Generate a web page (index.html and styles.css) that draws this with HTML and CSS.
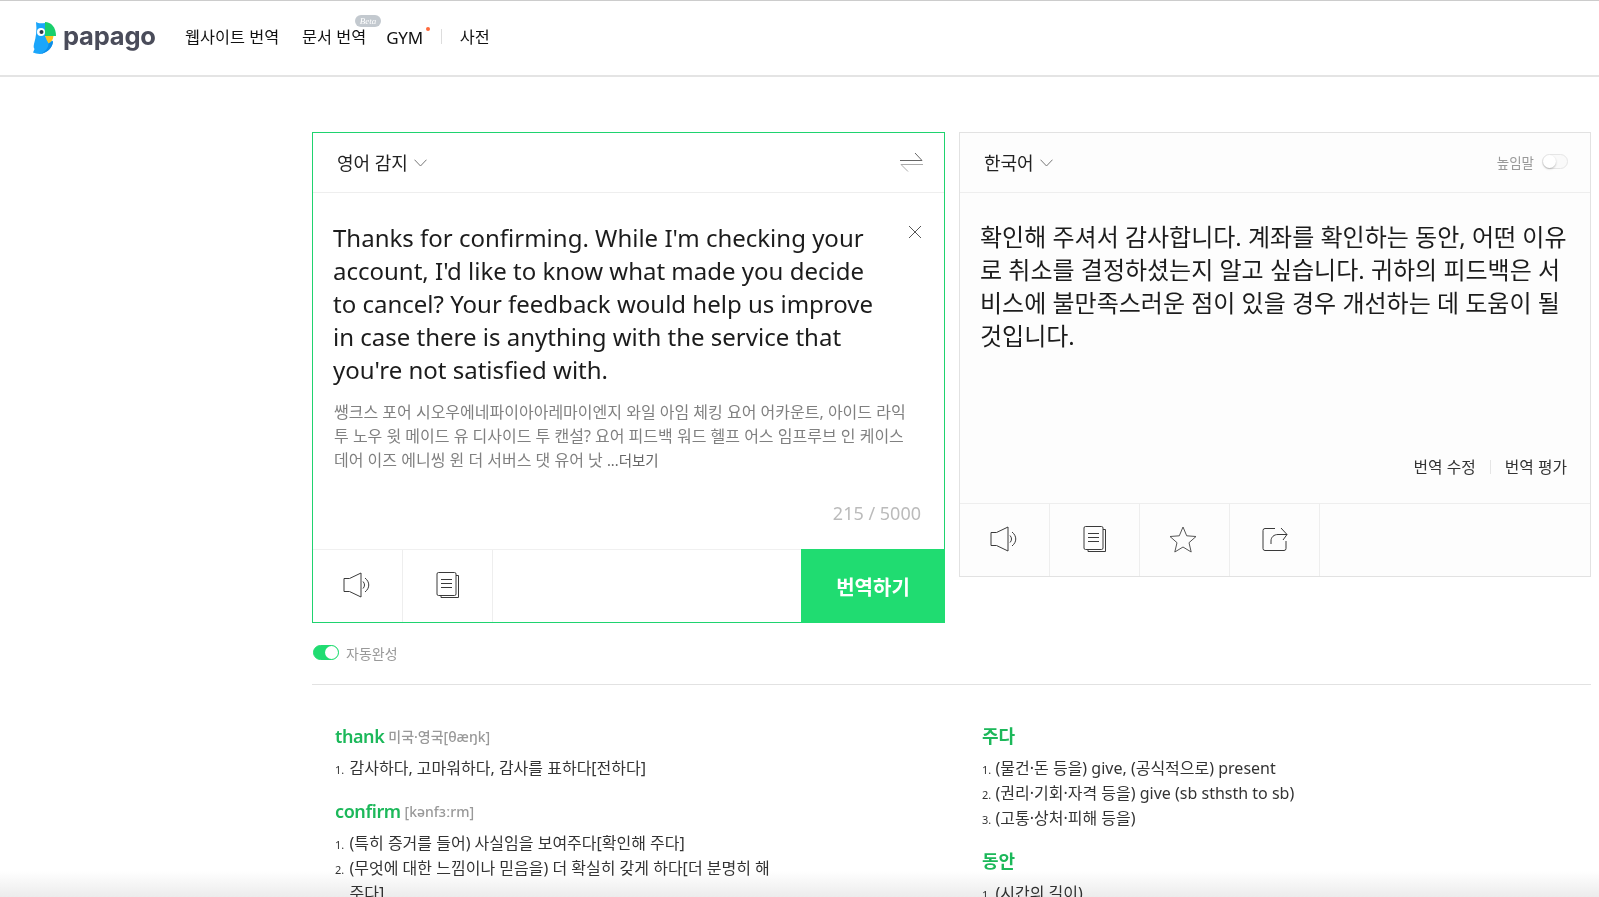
FILE: index.html
```html
<!DOCTYPE html>
<html lang="ko">
<head>
<meta charset="utf-8">
<title>Papago</title>
<link rel="stylesheet" href="styles.css">
</head>
<body>
<header class="top">
  <a class="logo">
    <svg class="bird" width="23" height="32" viewBox="0 0 23 32">
      <path d="M3 0 C5 1.500 8 1.500 12 1 V14 L20 20 C19 26 14 31 7 32 C4 32 2 31 0 30.500 L1.500 27 C.5 26 .5 24 1 22 C3 15 4 8 3 0Z" fill="#1ba6fb"/>
      <path d="M12 0 C18 0 23 5 23 14 H12Z" fill="#19cf6c"/>
      <path d="M12 14 H20.500 C20 18 18 20 15.500 21.500 C14 19 13 16.500 12 14Z" fill="#ffc41e"/>
      <path d="M15.500 21.500 C17 21 18.500 20 20 18.500 C20 26 14 31 7 32 C12 30 15.500 26 15.500 21.500Z" fill="#0d8de8"/>
      <circle cx="8" cy="10" r="4" fill="#fff"/>
      <circle cx="8.500" cy="10" r="2" fill="#2b3a4a"/>
    </svg>
    <span class="word">papago</span>
  </a>
  <nav class="nav">
    <a class="nav-item">웹사이트 번역</a>
    <a class="nav-item has-badge">문서 번역<span class="beta">Beta</span></a>
    <a class="nav-item has-dot">GYM<span class="dot"></span></a>
    <span class="sep"></span>
    <a class="nav-item">사전</a>
  </nav>
</header>

<main class="main">
  <div class="panels">
    <section class="panel source">
      <div class="panel-head">
        <span class="lang">영어 감지
          <svg class="chev" width="13" height="8" viewBox="0 0 13 8"><path d="M.5.700 6.500 7 12.500.700" fill="none" stroke="#777"/></svg>
        </span>
        <svg class="swap" width="23" height="20" viewBox="0 0 23 20"><path d="M0 8.500H22L15 1" fill="none" stroke="#666"/><path d="M23 12.500H1L8 19.500" fill="none" stroke="#aaa"/></svg>
      </div>
      <div class="source-body">
        <svg class="clear" width="14" height="14" viewBox="0 0 14 14"><path d="M1 1 13 13M13 1 1 13" fill="none" stroke="#555"/></svg>
        <p class="big">Thanks for confirming. While I'm checking your<br>account, I'd like to know what made you decide<br>to cancel? Your feedback would help us improve<br>in case there is anything with the service that<br>you're not satisfied with.</p>
        <p class="phon">쌩크스 포어 시오우에네파이아아레마이엔지 와일 아임 체킹 요어 어카운트, 아이드 라익<br>투 노우 윗 메이드 유 디사이드 투 캔설? 요어 피드백 워드 헬프 어스 임프루브 인 케이스<br>데어 이즈 에니씽 윈 더 서버스 댓 유어 낫 <span class="more">...더보기</span></p>
        <div class="count">215 / 5000</div>
      </div>
      <div class="panel-foot">
        <div class="tool">
          <svg width="29" height="26" viewBox="0 0 29 26"><path d="M1 6.500H6.500L18 1V25L6.500 19.500H1Z" fill="none" stroke="#3a3a3a" stroke-linejoin="round"/><path d="M20 9.500C22 11.500 22 14.500 20 16.500M22 6C27 10 27 16 22 20" fill="none" stroke="#3a3a3a"/></svg>
        </div>
        <div class="tool">
          <svg width="24" height="26" viewBox="0 0 24 26"><rect x="1" y=".500" width="19" height="23" rx="1.500" fill="#fff" stroke="#3a3a3a"/><path d="M20 3.500H22.500V25.500H5V24" fill="none" stroke="#3a3a3a"/><path d="M5 7.500H16M5 11.500H16M5 15.500H16" stroke="#3a3a3a"/></svg>
        </div>
        <div class="spacer"></div>
        <button class="go">번역하기</button>
      </div>
    </section>

    <section class="panel target">
      <div class="panel-head">
        <span class="lang">한국어
          <svg class="chev" width="13" height="8" viewBox="0 0 13 8"><path d="M.5.700 6.500 7 12.500.700" fill="none" stroke="#777"/></svg>
        </span>
        <span class="honor">높임말<span class="switch off"></span></span>
      </div>
      <div class="target-body">
        <p class="big ko">확인해 주셔서 감사합니다. 계좌를 확인하는 동안, 어떤 이유<br>로 취소를 결정하셨는지 알고 싶습니다. 귀하의 피드백은 서<br>비스에 불만족스러운 점이 있을 경우 개선하는 데 도움이 될<br>것입니다.</p>
        <div class="actions"><a>번역 수정</a><span class="sep small"></span><a>번역 평가</a></div>
      </div>
      <div class="panel-foot">
        <div class="tool">
          <svg width="29" height="26" viewBox="0 0 29 26"><path d="M1 6.500H6.500L18 1V25L6.500 19.500H1Z" fill="none" stroke="#3a3a3a" stroke-linejoin="round"/><path d="M20 9.500C22 11.500 22 14.500 20 16.500M22 6C27 10 27 16 22 20" fill="none" stroke="#3a3a3a"/></svg>
        </div>
        <div class="tool">
          <svg width="24" height="26" viewBox="0 0 24 26"><rect x="1" y=".500" width="19" height="23" rx="1.500" fill="#fdfdfd" stroke="#3a3a3a"/><path d="M20 3.500H22.500V25.500H5V24" fill="none" stroke="#3a3a3a"/><path d="M5 7.500H16M5 11.500H16M5 15.500H16" stroke="#3a3a3a"/></svg>
        </div>
        <div class="tool">
          <svg class="star" width="28" height="27" viewBox="0 0 28 27"><path d="M14 1 17.700 9.800 27 10.500 20 16.700 22.200 26 14 21 5.800 26 8 16.700 1 10.500 10.300 9.800Z" fill="none" stroke="#555" stroke-linejoin="round"/></svg>
        </div>
        <div class="tool">
          <svg width="26" height="26" viewBox="0 0 26 26"><path d="M13 2.500H3A2 2 0 0 0 1 4.500V22.500A2 2 0 0 0 3 24.500H22A2 2 0 0 0 24 22.500V15" fill="none" stroke="#3a3a3a"/><path d="M9 18V15C9 11 12 8.500 16 8.500H25M19 2 25 8.500 21 14" fill="none" stroke="#3a3a3a"/></svg>
        </div>
        <div class="spacer"></div>
      </div>
    </section>
  </div>

  <div class="auto"><span class="switch on"></span><span>자동완성</span></div>

  <div class="dict">
    <div class="dict-col en">
      <h3><b>thank</b> <small>미국·영국[θæŋk]</small></h3>
      <ol>
        <li>감사하다, 고마워하다, 감사를 표하다[전하다]</li>
      </ol>
      <h3><b>confirm</b> <small>[kənfɜːrm]</small></h3>
      <ol>
        <li>(특히 증거를 들어) 사실임을 보여주다[확인해 주다]</li>
        <li>(무엇에 대한 느낌이나 믿음을) 더 확실히 갖게 하다[더 분명히 해 주다]</li>
      </ol>
    </div>
    <div class="dict-col ko-col">
      <h3><b>주다</b></h3>
      <ol>
        <li>(물건·돈 등을) give, (공식적으로) present</li>
        <li>(권리·기회·자격 등을) give (sb sthsth to sb)</li>
        <li>(고통·상처·피해 등을)</li>
      </ol>
      <h3><b>동안</b></h3>
      <ol>
        <li>(시간의 길이)</li>
      </ol>
    </div>
  </div>
</main>
<div class="fade"></div>
</body>
</html>
```
FILE: styles.css
```css
* { box-sizing: border-box; }
html, body { margin: 0; height: 100%; }
body {
  height: 897px;
  overflow: hidden;
  position: relative;
  background: #fff;
  color: #222;
  font-family: "Noto Sans", "Noto Sans CJK KR", sans-serif;
}
p, h3, ol { margin: 0; padding: 0; }

.top {
  height: 77px;
  border-top: 1px solid #ccc;
  border-bottom: 2px solid #e4e4e4;
  display: flex;
  align-items: center;
  padding-left: 33px;
}
.logo { display: flex; align-items: center; width: 152px; margin-bottom: 1px; }
.word {
  font-family: Inter, "Noto Sans", sans-serif;
  font-weight: 700;
  font-size: 25.500px;
  line-height: 1;
  color: #4a4c5a;
  margin-left: 7px;
  margin-top: -3px;
  letter-spacing: -.2px;
}
.nav { display: flex; align-items: center; font-size: 16.300px; color: #111; margin-bottom: 4px; }
.nav-item { position: relative; margin-right: 23px; }
.has-dot { margin-right: 18px; font-size: 17px; letter-spacing: -.3px; margin-top: 2px; }
.has-badge { margin-right: 20px; }
.beta {
  position: absolute;
  left: 53px;
  top: -9px;
  width: 26px;
  height: 12px;
  border-radius: 7px;
  background: #c3c9cf;
  color: #fff;
  font: italic 9px/12px "Liberation Serif", serif;
  text-align: center;
}
.dot {
  position: absolute;
  right: -7px;
  top: 1px;
  width: 4px;
  height: 4px;
  border-radius: 50%;
  background: #ff6a3c;
}
.sep { width: 1px; height: 15px; background: #ddd; margin-right: 18px; }

.main { padding-left: 312px; padding-right: 8px; }
.panels {
  display: grid;
  grid-template-columns: 633px 632px;
  gap: 14px;
  align-items: start;
  margin-top: 55px;
}
.panel { display: flex; flex-direction: column; }
.source { height: 491px; border: 1px solid #1fd36f; background: #fff; }
.target { height: 445px; border: 1px solid #e2e2e2; background: #fdfdfd; }
.panel-head {
  height: 60px;
  flex: none;
  border-bottom: 1px solid #eee;
  padding: 0 21px 2px 24px;
  display: flex;
  align-items: center;
  justify-content: space-between;
}
.lang { font-size: 18px; color: #222; display: flex; align-items: center; gap: 6px; }
.chev { margin-top: 2px; }
.target .panel-head { padding-right: 22px; }

.source-body { flex: 1; position: relative; padding: 28px 20px 0 20px; }
.clear { position: absolute; right: 22px; top: 32px; }
.big { font-size: 24px; line-height: 33px; color: #1c1c1c; }
.phon { font-size: 16px; line-height: 24px; color: #808080; margin-top: 14px; margin-left: 1px; }
.more { color: #666; font-size: 14.500px; }
.count { position: absolute; right: 23px; bottom: 24px; font-size: 18px; color: #bbb; }

.panel-foot { height: 73px; flex: none; border-top: 1px solid #f0f0f0; display: flex; }
.tool {
  width: 90px;
  border-right: 1px solid #eee;
  display: flex;
  align-items: center;
  justify-content: center;
  padding-bottom: 2px;
}
.star { margin-right: 4px; }
.spacer { flex: 1; }
.go {
  width: 144px;
  margin: -1px -1px -1px 0;
  border: 0;
  background: #20dc71;
  color: #fff;
  font: 700 20px "Noto Sans", "Noto Sans CJK KR", sans-serif;
}

.target-body { flex: 1; padding: 27px 20px 0; position: relative; }
.target .panel-foot { height: 73px; border-top: 1px solid #eee; }
.actions {
  position: absolute;
  right: 23px;
  bottom: 25px;
  display: flex;
  align-items: center;
  font-size: 15.800px;
  color: #333;
}
.sep.small { height: 14px; margin: 0 14px; background: #e5e5e5; }
.honor { display: flex; align-items: center; gap: 8px; font-size: 13.500px; color: #999; }
.switch { display: block; width: 26px; height: 15px; border-radius: 8px; position: relative; }
.switch::after {
  content: "";
  position: absolute;
  top: 0;
  width: 13px;
  height: 13px;
  border-radius: 50%;
  background: #fff;
}
.switch.off { border: 1px solid #e6e6e6; background: #fafafa; }
.switch.off::after { left: 0; box-shadow: 0 1px 2px rgba(0,0,0,.25); }
.switch.on { background: #20dc71; border: 1px solid #20dc71; margin-left: 1px; }
.switch.on::after { right: 0; }

.auto {
  display: flex;
  align-items: center;
  gap: 7px;
  height: 15px;
  margin-top: 22px;
  font-size: 14px;
  color: #999;
}
.dict {
  margin-top: 24px;
  border-top: 1px solid #e2e2e2;
  display: grid;
  grid-template-columns: 646px 1fr;
  padding: 38px 0 0 23px;
}
.dict-col { width: 440px; }
.ko-col { margin-left: 1px; }
h3 { font-weight: 400; height: 28px; line-height: 26px; margin-bottom: 5px; white-space: nowrap; }
h3 b { font-weight: 600; font-size: 18px; color: #1cb85a; }
h3 small { font-size: 14px; font-weight: 500; color: #999; margin-left: -1px; vertical-align: 1px; }
.en b { letter-spacing: -.4px; }
ol { list-style: none; counter-reset: n; margin-bottom: 17px; }
li {
  counter-increment: n;
  position: relative;
  padding-left: 14.500px;
  font-size: 16px;
  line-height: 25px;
  color: #333;
}
.ko-col li { padding-left: 13.500px; }
li::before {
  content: counter(n) ".";
  position: absolute;
  left: 0;
  top: 1px;
  font-size: 11px;
}
.fade {
  position: absolute;
  left: 0;
  right: 0;
  bottom: 0;
  height: 26px;
  background: linear-gradient(to bottom, #fff, #ececec);
  mix-blend-mode: multiply;
}
```
